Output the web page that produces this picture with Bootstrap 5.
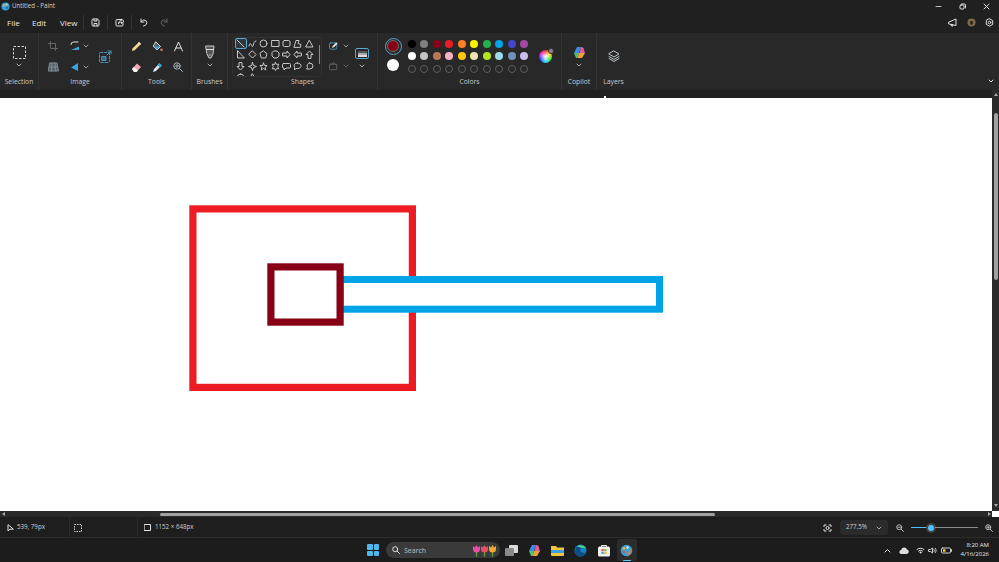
<!DOCTYPE html>
<html lang="en">
<head>
<meta charset="UTF-8">
<title>Untitled - Paint</title>
<link href="https://cdn.jsdelivr.net/npm/bootstrap@5.3.0/dist/css/bootstrap.min.css" rel="stylesheet">
<style>
html, body { height: 100%; overflow: hidden; }
body { background: #202020; color: #e4e4e4; font-family: "Open Sans", "Noto Sans", sans-serif; font-size: 7px; line-height: 1; }
svg { display: block; fill: none; stroke: #e0e0e0; stroke-width: 1; stroke-linejoin: round; stroke-linecap: round; }
.dash-ic { stroke-linecap: butt; stroke-linejoin: miter; stroke: #d0d0d0; }

.app-shell { width: 999px; height: 562px; }
.title-bar { height: 12px; padding-left: 1px; background: #202020; }
.title-text { font-size: 6.2px; color: #cfcfcf; margin-left: 2px; }
.win-btns { margin-left: auto; margin-right: 1px; }
.win-btn { width: 24px; height: 12px; }

.menu-bar { height: 21px; background: #202020; }
.menu-item { font-size: 8px; color: #e8e8e8; }
.m-file { margin-left: 7px; width: 25px; }
.m-edit { width: 28px; }
.m-view { width: 23px; }
.menu-sep { width: 1px; height: 15px; background: #333; }
.qa-btn { width: 23px; }
.qa-last { width: 19px; }
.menu-right { margin-left: auto; width: 51px; padding-right: 5px; }

.ribbon { height: 57px; background: #282828; }
.rb-group { height: 57px; border-right: 1px solid #333; flex: none; }
.rb-body { height: 43.5px; padding-top: 2.5px; }
.rb-stack { padding-top: 13px; }
.rb-label { font-size: 6.8px; color: #c8c8c8; text-align: center; height: 9px; line-height: 9px; }
.ic-cell { height: 21px; }
.g-select { width: 39px; }
.g-image { width: 83px; }
.g-image .rb-body { display: grid; grid-template-columns: 28px 16px 6px 33px; grid-template-rows: 21px 21px; }
.span-rows { grid-column: 4; grid-row: 1 / 3; }
.g-tools { width: 70px; }
.g-tools .rb-body { display: grid; grid-template-columns: repeat(3, 21px); grid-template-rows: 21px 21px; padding-left: 3.5px; }
.g-brushes { width: 36px; }
.g-brushes .rb-stack { padding-top: 12px; }
.g-shapes { width: 150px; }
.shape-box { position: relative; margin: 1px 0 0 4px; width: 90px; height: 40px; border: 1px solid #333; border-radius: 4px; overflow: hidden; padding: .5px 0 0 2.3px; display: grid; grid-template-columns: repeat(7, 11.4px); grid-auto-rows: 11.3px; flex: none; }
.shape-cell { position: relative; }
.shape-cell svg { stroke: #c8c8c8; }
.shape-on { border: 1px solid #5aa7cf; border-radius: 2px; background: #30383d; }
.shape-scroll { position: absolute; left: 85.5px; top: 7px; width: 1.5px; height: 19px; background: #8a8a8a; }
.shape-opts { width: 30px; flex: none; padding-left: 7px; }
.size-col { width: 20px; flex: none; padding-top: 12.500px; }
.size-box { width: 14px; height: 11px; border: 1px solid #5aa7cf; border-radius: 2px; margin-bottom: 5px; }
.size-bars { width: 9px; height: 6px; background: linear-gradient(#555 0 2px, #aaa 2px 4px, #ddd 4px); }
.g-colors { width: 184px; }
.active-col { width: 27.8px; padding-left: 3px; flex: none; }
.col-ring { width: 17px; height: 17px; border-radius: 50%; border: 1px solid #5aa7cf; padding: 1.5px; margin-top: 2px; }
.col-one { width: 100%; height: 100%; border-radius: 50%; background: #880015; border: 1px solid #6b6b6b; }
.col-two { width: 12px; height: 12px; border-radius: 50%; background: #fff; margin-top: 4.5px; }
.sw-grid { display: grid; grid-template-columns: repeat(10, 12.45px); grid-auto-rows: 12.4px; padding-top: 2.3px; flex: none; }
.sw-dot { width: 8px; height: 8px; border-radius: 50%; }
.sw-empty { border: 1px solid #5e5e5e; }
.rainbow-col { flex: 1; }
.rainbow { position: relative; width: 13px; height: 13px; border-radius: 50%; background: radial-gradient(#fff 0, rgba(255,255,255,0) 65%), conic-gradient(#ff2a2a, #ffd800, #30e030, #20d0ff, #2a40ff, #e020e0, #ff2a2a); }
.rainbow-badge { position: absolute; right: -2px; top: -2px; width: 6px; height: 6px; border-radius: 50%; background: #888; border: 1px solid #3a3a3a; }
.g-copilot { width: 35px; }
.g-layers { width: 33px; border-right: 0; }
.rb-rest { margin-left: auto; width: 16px; padding-bottom: 7px; }

.work-band { height: 8px; background: #202020; position: relative; }
.handle { position: absolute; left: 604px; top: 6px; width: 2px; height: 2px; background: #fff; }
.canvas-row { height: 421px; margin-top: -8px; }
.canvas-view { width: 992px; padding-top: 8px; }
.paper { display: block; width: 992px; height: 413px; background: #fff; }
.v-track { width: 7px; height: 100%; background: #2a2a2a; position: relative; }
.v-thumb { width: 3.5px; height: 167px; background: #a0a0a0; border-radius: 2px; margin: 17px 0 0 2px; }
.arrow-up { width: 0; height: 0; border: 2.5px solid transparent; border-bottom: 3px solid #a8a8a8; border-top: 0; margin: 3px 0 0 1.5px; }
.arrow-down { position: absolute; left: 1.5px; bottom: 4px; border: 2.5px solid transparent; border-top: 3px solid #a8a8a8; border-bottom: 0; }

.h-row { height: 6px; background: #fff; }
.h-track { width: 992px; height: 6px; background: #2a2a2a; position: relative; }
.h-thumb { position: absolute; left: 160px; top: 1.500px; width: 555px; height: 3px; background: #a0a0a0; border-radius: 2px; }
.ar-left { position: absolute; left: 2px; top: .5px; border: 2.5px solid transparent; border-right: 3px solid #a8a8a8; border-left: 0; }
.ar-right { position: absolute; right: 1px; top: .5px; border: 2.5px solid transparent; border-left: 3px solid #a8a8a8; border-right: 0; }

.status-bar { height: 21px; background: #1e1e1e; border-bottom: 1px solid #2c2c2c; color: #cfcfcf; font-size: 6.2px; padding-top: 1px; }
.st-cell { height: 19px; }
.st-pos { width: 70px; padding-left: 7px; border-right: 1px solid #2b2b2b; gap: 3px; }
.st-sel { width: 68px; padding-left: 4px; border-right: 1px solid #2b2b2b; }
.st-size { padding-left: 6px; gap: 4px; }
.st-right { margin-left: auto; padding-right: 6px; }
.zoom-pick { width: 48px; height: 15px; background: #2b2b2b; border-radius: 3px; margin: 0 8px; padding: 0 6px; font-size: 6.2px; }
.slider-on { width: 16px; height: 1.5px; background: #4cc2ff; margin-left: 7px; }
.slider-knob { width: 6px; height: 6px; border-radius: 50%; background: #4cc2ff; box-shadow: 0 0 0 2px #454545; margin: 0 1px; }
.slider-off { width: 43px; height: 1.5px; background: #8a8a8a; margin-right: 7px; }

.task-bar { height: 24px; background: #1c1c1c; position: relative; }
.task-center { position: absolute; left: 362px; top: 0; height: 24px; }
.start-btn { display: grid; grid-template-columns: 5.5px 5.5px; grid-template-rows: 5.5px 5.5px; gap: 1px; width: 22px; justify-content: center; }
.start-btn span { background: #4fb8ea; border-radius: 1px; }
.search-pill { width: 114px; height: 16px; margin-left: 2px; background: #3a3a3a; border-radius: 8px; padding: 0 1px 0 6px; color: #c0c0c0; font-size: 7px; }
.task-ic { width: 23px; height: 22px; }
.task-on { background: #2c2c2c; border-radius: 3px; position: relative; width: 20px; margin: 0 1.5px; }
.task-on::after { content: ""; position: absolute; left: 6px; bottom: 0; width: 8px; height: 1.5px; background: #60cdff; border-radius: 1px; }
.tray { position: absolute; right: 0; top: 0; height: 24px; padding-right: 10px; }
.tr-chev { margin-right: 8.5px; }
.tr-cloud { margin-right: 6.5px; }
.tr-wifi { margin-right: 3px; }
.tr-vol { margin-right: 4px; }
.clock { width: 34px; text-align: right; color: #e6e6e6; font-size: 6px; line-height: 9px; margin-left: 3.5px; }
</style>
</head>
<body>
<svg width="0" height="0" style="position:absolute">
  <symbol id="chev" viewBox="0 0 6 4"><path d="M1 1l2 2 2-2"/></symbol>
</svg>

<div class="app-shell d-flex flex-column">
  <!-- title -->
  <div class="title-bar d-flex align-items-center">
    <svg width="9" height="9" viewBox="0 0 8 8" style="stroke:none"><circle cx="4" cy="4" r="3.6" fill="#3aa0d8"/><circle cx="2.6" cy="3" r="1" fill="#e8b23a"/><circle cx="5" cy="2.2" r=".9" fill="#d9d9d9"/><circle cx="5.4" cy="5.2" r="1" fill="#1b6ea8"/></svg>
    <span class="title-text">Untitled - Paint</span>
    <div class="win-btns d-flex">
      <div class="win-btn d-flex align-items-center justify-content-center"><svg width="7" height="7" viewBox="0 0 7 7"><path d="M1 3.500h5" stroke="#bbb"/></svg></div>
      <div class="win-btn d-flex align-items-center justify-content-center"><svg width="7" height="7" viewBox="0 0 7 7"><rect x="1" y="2" width="4" height="4" rx="1"/><path d="M2.500 1h3a1 1 0 0 1 1 1v3"/></svg></div>
      <div class="win-btn d-flex align-items-center justify-content-center"><svg width="7" height="7" viewBox="0 0 7 7"><path d="M1 1l5 5M6 1l-5 5"/></svg></div>
    </div>
  </div>

  <!-- menu -->
  <div class="menu-bar d-flex align-items-center">
    <span class="menu-item m-file">File</span>
    <span class="menu-item m-edit">Edit</span>
    <span class="menu-item m-view">View</span>
    <div class="menu-sep"></div>
    <div class="qa-btn d-flex justify-content-center"><svg width="9" height="9" viewBox="0 0 9 9"><path d="M1 2a1 1 0 0 1 1-1h4.500l1.500 1.500V7a1 1 0 0 1-1 1H2a1 1 0 0 1-1-1z"/><path d="M3 1v2h3V1M3 8V5.500h3V8"/></svg></div>
    <div class="menu-sep"></div>
    <div class="qa-btn d-flex justify-content-center"><svg width="10" height="9" viewBox="0 0 10 9"><path d="M6 1.500H2a1 1 0 0 0-1 1V7a1 1 0 0 0 1 1h5a1 1 0 0 0 1-1V5"/><path d="M3.500 5.500c0-2 1.500-3 3-3V1l2.500 2.300-2.500 2.200V4c-1.200 0-2 .5-3 1.500z"/></svg></div>
    <div class="menu-sep"></div>
    <div class="qa-btn d-flex justify-content-center"><svg width="9" height="9" viewBox="0 0 9 9"><path d="M2 1v3h3M2 4c1-1.500 2-2 3-2a2.800 2.800 0 0 1 1 5.400L4.500 8"/></svg></div>
    <div class="qa-last d-flex justify-content-center"><svg width="9" height="9" viewBox="0 0 9 9" style="stroke:#666"><path d="M7 1v3H4M7 4C6 2.500 5 2 4 2a2.800 2.800 0 0 0-1 5.400L4.500 8"/></svg></div>
    <div class="menu-right d-flex align-items-center justify-content-between ms-auto">
      <svg width="10" height="9" viewBox="0 0 10 9"><path d="M1 4l7-3v6.500L1 6zM3 6.300l.5 1.700h1.500l-.4-1.400"/></svg>
      <svg width="9" height="9" viewBox="0 0 9 9" style="stroke:none"><circle cx="4.500" cy="4.500" r="4" fill="#7d6a4a"/><rect x="3.300" y="3" width="2.400" height="3.500" fill="#2a2218"/></svg>
      <svg width="9" height="9" viewBox="0 0 9 9"><path d="M4.500.8l3.200 1.800v3.800L4.500 8.200 1.300 6.400V2.600z"/><circle cx="4.500" cy="4.500" r="1.300"/></svg>
    </div>
  </div>

  <!-- ribbon -->
  <div class="ribbon d-flex">
    <div class="rb-group g-select">
      <div class="rb-body rb-stack d-flex flex-column align-items-center">
        <svg class="dash-ic" width="13" height="13" viewBox="0 0 13 13" stroke-dasharray="2.500 1.500"><rect x=".5" y=".5" width="12" height="12"/></svg>
        <svg class="mt-1" width="6" height="4" style="stroke:#aaa"><use href="#chev"/></svg>
      </div>
      <div class="rb-label">Selection</div>
    </div>

    <div class="rb-group g-image">
      <div class="rb-body">
        <div class="ic-cell d-flex align-items-center justify-content-center"><svg width="10" height="10" viewBox="0 0 10 10" style="stroke:#666"><path d="M2.500 0v7.500H10M0 2.500h7.500V10"/></svg></div>
        <div class="ic-cell d-flex align-items-center justify-content-center"><svg width="10" height="10" viewBox="0 0 10 10"><path d="M1 3.500a2.500 2.500 0 0 1 2.500-2.500H8" stroke="#ddd"/><path d="M1 9h8V5.500z" fill="#3aa5dc" stroke="none"/></svg></div>
        <div class="ic-cell d-flex align-items-center justify-content-center"><svg width="6" height="4" style="stroke:#999"><use href="#chev"/></svg></div>
        <div class="span-rows d-flex align-items-center justify-content-center"><svg width="13" height="13" viewBox="0 0 13 13" style="stroke:#4a93b8"><rect x=".5" y="2.500" width="10" height="10" rx="1" stroke-dasharray="2.500 1.500"/><path d="M8 5l4-4M9 1h3v3"/><rect x="3" y="6.500" width="4" height="4" fill="#3a6a84"/></svg></div>
        <div class="ic-cell d-flex align-items-center justify-content-center"><svg width="11" height="10" viewBox="0 0 11 10" style="stroke:#7e8c96"><path d="M2 1h7l1.500 8h-10z" fill="#556069"/><path d="M4 1l-.5 8M7 1l.5 8M1.500 5h8"/></svg></div>
        <div class="ic-cell d-flex align-items-center justify-content-center"><svg width="10" height="10" viewBox="0 0 10 10" style="stroke:none"><path d="M8 1v8L1 5.500z" fill="#3aa5dc"/></svg></div>
        <div class="ic-cell d-flex align-items-center justify-content-center"><svg width="6" height="4" style="stroke:#999"><use href="#chev"/></svg></div>
      </div>
      <div class="rb-label">Image</div>
    </div>

    <div class="rb-group g-tools">
      <div class="rb-body">
        <div class="ic-cell d-flex align-items-center justify-content-center"><svg width="11" height="11" viewBox="0 0 11 11" style="stroke:none"><path d="M1 10l.7-2.700L8 1l2 2-6.300 6.300z" fill="#f2d98b"/><path d="M8 1l2 2-1 1-2-2z" fill="#e8e8e8"/></svg></div>
        <div class="ic-cell d-flex align-items-center justify-content-center"><svg width="11" height="11" viewBox="0 0 11 11"><path d="M4 1l4.500 4.500L5 9 1.500 5.500z" fill="#55616b" stroke="#ddd"/><path d="M2 5.500h6L5 9z" fill="#3aa5dc" stroke="none"/><circle cx="9.500" cy="8.800" r="1.300" fill="#e8734a" stroke="none"/></svg></div>
        <div class="ic-cell d-flex align-items-center justify-content-center"><svg width="11" height="11" viewBox="0 0 11 11"><path d="M1.500 10L5.500 1l4 9M3 7h5"/></svg></div>
        <div class="ic-cell d-flex align-items-center justify-content-center"><svg width="11" height="11" viewBox="0 0 11 11" style="stroke:none"><path d="M1 7l5-5.500 4 3.500-4.500 5H3z" fill="#eda8b4"/><path d="M1 7l2-2 4 3.300L5.500 10H3z" fill="#f7f7f7"/></svg></div>
        <div class="ic-cell d-flex align-items-center justify-content-center"><svg width="11" height="11" viewBox="0 0 11 11"><path d="M1 10l1-3 4-4 2 2-4 4z" fill="#dfe7ee" stroke="none"/><path d="M5.500 2.500l2-1.500 2.500 2.500L8.500 5.500z" fill="#3aa5dc" stroke="none"/></svg></div>
        <div class="ic-cell d-flex align-items-center justify-content-center"><svg width="10" height="10" viewBox="0 0 10 10" style="stroke:#aab4ba"><circle cx="4" cy="4" r="3.200"/><path d="M6.500 6.500L9.500 9.500M2.500 4h3M4 2.500v3"/></svg></div>
      </div>
      <div class="rb-label">Tools</div>
    </div>

    <div class="rb-group g-brushes">
      <div class="rb-body rb-stack d-flex flex-column align-items-center">
        <svg width="10" height="14" viewBox="0 0 10 14" style="stroke:#c8c8c8"><path d="M1 1h8l-1 8-2 4H4L2 9z" fill="#555"/><path d="M1.500 4.500h7" stroke="#ddd"/><path d="M4 10h2" stroke="#aaa"/></svg>
        <svg class="mt-1" width="6" height="4" style="stroke:#aaa"><use href="#chev"/></svg>
      </div>
      <div class="rb-label">Brushes</div>
    </div>

    <div class="rb-group g-shapes">
      <div class="rb-body d-flex">
        <div class="shape-box" id="shapeBox">
          <div class="shape-scroll"></div>
        </div>
        <div class="shape-opts d-flex flex-column">
          <div class="ic-cell d-flex align-items-center gap-1"><svg width="10" height="10" viewBox="0 0 11 10"><rect x=".5" y="1.500" width="8" height="7" rx="1.500" stroke="#4a93b8"/><path d="M3 7l1-2 4-4 1.500 1.500-4 4z" fill="#ddd" stroke="none"/></svg><svg width="6" height="4" style="stroke:#999"><use href="#chev"/></svg></div>
          <div class="ic-cell d-flex align-items-center gap-1"><svg width="10" height="10" viewBox="0 0 11 10" style="stroke:#666"><rect x=".5" y="3" width="8" height="6" rx="1"/><path d="M3 3l2-2 3 3"/></svg><svg width="6" height="4" style="stroke:#666"><use href="#chev"/></svg></div>
        </div>
        <div class="size-col d-flex flex-column align-items-center">
          <div class="size-box d-flex align-items-center justify-content-center"><div class="size-bars"></div></div>
          <svg width="6" height="4" style="stroke:#aaa"><use href="#chev"/></svg>
        </div>
      </div>
      <div class="rb-label">Shapes</div>
    </div>

    <div class="rb-group g-colors">
      <div class="rb-body d-flex">
        <div class="active-col d-flex flex-column align-items-center">
          <div class="col-ring"><div class="col-one"></div></div>
          <div class="col-two"></div>
        </div>
        <div class="sw-grid" id="swatches"></div>
        <div class="rainbow-col d-flex align-items-center justify-content-center">
          <div class="rainbow"><div class="rainbow-badge"></div></div>
        </div>
      </div>
      <div class="rb-label">Colors</div>
    </div>

    <div class="rb-group g-copilot">
      <div class="rb-body rb-stack d-flex flex-column align-items-center">
        <svg width="13" height="13" viewBox="0 0 13 13" style="stroke:none"><path d="M4 1h4L6 7H1z" fill="#3a8be8"/><path d="M8 1a3 3 0 0 1 3 3l1 3H6.500z" fill="#e85a9a"/><path d="M1 7h5L4.500 12H3z" fill="#4fc36a"/><path d="M6 7h6L9 12H4.500z" fill="#f2a03a"/></svg>
        <svg class="mt-1" width="6" height="4" style="stroke:#aaa"><use href="#chev"/></svg>
      </div>
      <div class="rb-label">Copilot</div>
    </div>

    <div class="rb-group g-layers">
      <div class="rb-body d-flex align-items-center justify-content-center">
        <svg width="12" height="12" viewBox="0 0 12 12" style="stroke:#b8c4c8"><path d="M6 1l5 3-5 3-5-3zM1 6.500l5 3 5-3M1 8.500l5 3 5-3"/></svg>
      </div>
      <div class="rb-label">Layers</div>
    </div>

    <div class="rb-rest d-flex align-items-end justify-content-center">
      <svg width="6" height="4"><use href="#chev"/></svg>
    </div>
  </div>

  <div class="work-band"><div class="handle"></div></div>

  <!-- canvas -->
  <div class="canvas-row d-flex">
    <div class="canvas-view">
      <svg class="paper" viewBox="0 0 992 413" style="stroke-linecap:butt;stroke-linejoin:miter">
        <rect x="192.900" y="110.900" width="219.500" height="178.500" stroke="#ed1c24" stroke-width="7.200"/>
        <rect x="340" y="181.500" width="319.500" height="29.700" fill="#fff" stroke="#00a2e8" stroke-width="7"/>
        <rect x="270.900" y="168.900" width="69.200" height="55.200" fill="#fff" stroke="#880015" stroke-width="7.200"/>
      </svg>
    </div>
    <div class="v-track">
      <div class="arrow-up"></div>
      <div class="v-thumb"></div>
      <div class="arrow-down"></div>
    </div>
  </div>

  <div class="h-row">
    <div class="h-track"><div class="ar-left"></div><div class="h-thumb"></div><div class="ar-right"></div></div>
  </div>

  <!-- status -->
  <div class="status-bar d-flex align-items-center">
    <div class="st-cell st-pos d-flex align-items-center">
      <svg width="7" height="8" viewBox="0 0 7 8"><path d="M1 1v6l2-1.800h3z"/></svg><span>539, 79px</span>
    </div>
    <div class="st-cell st-sel d-flex align-items-center">
      <svg class="dash-ic" width="8" height="8" viewBox="0 0 8 8" stroke-dasharray="1.500 1"><rect x=".5" y=".5" width="7" height="7"/></svg>
    </div>
    <div class="st-cell st-size d-flex align-items-center">
      <svg width="7" height="7" viewBox="0 0 7 7"><rect x=".5" y=".5" width="6" height="6"/></svg><span>1152 × 648px</span>
    </div>
    <div class="st-right d-flex align-items-center">
      <svg width="9" height="8" viewBox="0 0 9 8"><path d="M1 2.500V1h2M6 1h2v1.500M1 5.500V7h2M6 7h2V5.500"/><circle cx="4.500" cy="4" r="1.500"/></svg>
      <div class="zoom-pick d-flex align-items-center justify-content-between"><span>277.5%</span><svg width="6" height="4" style="stroke:#aaa"><use href="#chev"/></svg></div>
      <svg width="8" height="8" viewBox="0 0 8 8" style="stroke:#bbb"><circle cx="3.200" cy="3.200" r="2.500"/><path d="M5.200 5.200L7.500 7.500M2 3.200h2.400"/></svg>
      <div class="slider-on"></div><div class="slider-knob"></div><div class="slider-off"></div>
      <svg width="8" height="8" viewBox="0 0 8 8" style="stroke:#bbb"><circle cx="3.200" cy="3.200" r="2.500"/><path d="M5.200 5.200L7.500 7.500M2 3.200h2.400M3.200 2v2.400"/></svg>
    </div>
  </div>

  <!-- taskbar -->
  <div class="task-bar">
    <div class="task-center d-flex align-items-center">
      <div class="start-btn"><span></span><span></span><span></span><span></span></div>
      <div class="search-pill d-flex align-items-center">
        <svg width="8" height="8" viewBox="0 0 8 8" style="stroke:#ddd"><circle cx="3.200" cy="3.200" r="2.500"/><path d="M5.200 5.200L7.500 7.500"/></svg>
        <span class="ms-1">Search</span>
        <svg class="ms-auto" width="27" height="14" viewBox="0 0 27 14" style="stroke:none">
          <path d="M4.500 8v5M12.500 8v5M20.500 8v5" stroke="#5c9a3c" stroke-width="1.500"/>
          <path d="M1 3l2 1.500L4.500 2 6 4.500 8 3v3a3.500 3.500 0 0 1-7 0z" fill="#e84fa8"/>
          <path d="M9 3l2 1.500L12.500 2 14 4.500 16 3v3a3.500 3.500 0 0 1-7 0z" fill="#e8506a"/>
          <path d="M17 3l2 1.500L20.500 2 22 4.500 24 3v3a3.500 3.500 0 0 1-7 0z" fill="#f0a830"/>
        </svg>
      </div>
      <div class="task-ic d-flex align-items-center justify-content-center"><svg width="13" height="11" viewBox="0 0 13 11" style="stroke:none"><rect x="4" y="0" width="9" height="8" rx="1" fill="#dcdcdc"/><rect x="0" y="3" width="9" height="8" rx="1" fill="#8a8a8a"/></svg></div>
      <div class="task-ic d-flex align-items-center justify-content-center"><svg width="13" height="13" viewBox="0 0 13 13" style="stroke:none"><path d="M4 1h4L6 7H1z" fill="#3a8be8"/><path d="M8 1a3 3 0 0 1 3 3l1 3H6.500z" fill="#e85a9a"/><path d="M1 7h5L4.500 12H3z" fill="#4fc36a"/><path d="M6 7h6L9 12H4.500z" fill="#f2a03a"/></svg></div>
      <div class="task-ic d-flex align-items-center justify-content-center"><svg width="13" height="11" viewBox="0 0 13 11" style="stroke:none"><path d="M0 1h5l1 1.500h7V10a1 1 0 0 1-1 1H1a1 1 0 0 1-1-1z" fill="#f2c33c"/><rect x="0" y="5" width="13" height="3" fill="#3aa0e0"/></svg></div>
      <div class="task-ic d-flex align-items-center justify-content-center"><svg width="13" height="13" viewBox="0 0 13 13" style="stroke:none"><circle cx="6.500" cy="6.500" r="6" fill="#1580c4"/><path d="M1 7a6 6 0 0 1 11.500-2c-1-2-6-2.500-6.500 1 0 2 3 3.500 6 2.500A6 6 0 0 1 7 12.500 5 5 0 0 1 1 7z" fill="#0c4f86"/><path d="M3 2.500a6 6 0 0 1 9.500 3c-1-1.500-2.500-2-4-1.500z" fill="#4fdc8a"/></svg></div>
      <div class="task-ic d-flex align-items-center justify-content-center"><svg width="12" height="13" viewBox="0 0 12 13" style="stroke:none"><rect x="0" y="2.500" width="12" height="10" rx="1.500" fill="#efefef"/><path d="M3.500 3V1.500h5V3" stroke="#efefef" fill="none"/><rect x="3.500" y="5" width="2.200" height="2.200" fill="#e8533a"/><rect x="6.300" y="5" width="2.200" height="2.200" fill="#7cbb3a"/><rect x="3.500" y="7.800" width="2.200" height="2.200" fill="#2ea0e8"/><rect x="6.300" y="7.800" width="2.200" height="2.200" fill="#f2b92c"/></svg></div>
      <div class="task-ic task-on d-flex align-items-center justify-content-center"><svg width="13" height="13" viewBox="0 0 13 13" style="stroke:none"><circle cx="6.500" cy="6.500" r="5.800" fill="#3aa0d8"/><circle cx="4" cy="4.500" r="1.400" fill="#e8b23a"/><circle cx="7.500" cy="3.500" r="1.200" fill="#e8e8e8"/><circle cx="3.800" cy="8" r="1.200" fill="#d8503a"/><path d="M7 13l1-5 3-3-1 5z" fill="#e07a3a"/></svg></div>
    </div>
    <div class="tray d-flex align-items-center">
      <svg class="tr-chev" width="7" height="5" viewBox="0 0 7 5" style="stroke:#eee"><path d="M1 4l2.500-2.500L6 4"/></svg>
      <svg class="tr-cloud" width="10" height="7" viewBox="0 0 10 7" style="stroke:none"><path d="M2.500 7a2 2 0 0 1-.3-4A3 3 0 0 1 8 2.500 2.300 2.300 0 0 1 7.800 7z" fill="#dcdcdc"/></svg>
      <svg class="tr-wifi" width="9" height="7" viewBox="0 0 9 7" style="stroke:#ddd"><path d="M1 2.500a5 5 0 0 1 7 0M2.500 4a3 3 0 0 1 4 0"/><circle cx="4.500" cy="5.500" r=".6" fill="#ddd"/></svg>
      <svg class="tr-vol" width="9" height="7" viewBox="0 0 9 7" style="stroke:#ccc"><path d="M1 2.500h1.500L4.500 1v5L2.500 4.500H1zM6 2.300a1.500 1.500 0 0 1 0 2.400M7.300 1.300a3 3 0 0 1 0 4.400"/></svg>
      <svg width="11" height="7" viewBox="0 0 11 7"><rect x=".5" y="1" width="9" height="5" rx="1" stroke="#ccc"/><rect x="2" y="2.200" width="2.500" height="2.600" fill="#f2c33c" stroke="none"/><path d="M10.500 2.700v1.600" stroke="#ccc"/></svg>
      <div class="clock">8:20 AM<br>4/16/2026</div>
    </div>
  </div>
</div>

<script>
// colour palette rows, empty strings are the unset custom slots
const palette = ["#000000","#7f7f7f","#880015","#ed1c24","#ff7f27","#fff200","#22b14c","#00a2e8","#3f48cc","#a349a4",
  "#ffffff","#c3c3c3","#b97a57","#ffaec9","#ffc90e","#efe4b0","#b5e61d","#99d9ea","#7092be","#c8bfe7",
  "","","","","","","","","",""];
const swatches = document.getElementById("swatches");
palette.forEach(c => {
  const cell = document.createElement("div");
  cell.className = "d-flex align-items-center justify-content-center";
  const dot = document.createElement("div");
  dot.className = c ? "sw-dot" : "sw-dot sw-empty";
  if (c) dot.style.background = c;
  cell.appendChild(dot);
  swatches.appendChild(cell);
});

// shape gallery glyphs, 9x9 outlines
const shapes = [
  '<path d="M1 1l7 7"/>','<path d="M1 7c1.500-7 3 3 4 0s1-5 3-5"/>','<circle cx="4.500" cy="4.500" r="3.500"/>','<rect x="1" y="1.500" width="7" height="6"/>','<rect x="1" y="1.500" width="7" height="6" rx="1.500"/>','<path d="M1 8l2-6.500h3l-1 3 3 1-.5 2.500z"/>','<path d="M4.500 1.500L8 8H1z"/>',
  '<path d="M1.500 1v7H8z"/>','<path d="M4.500 1L8 4.500 4.500 8 1 4.500z"/>','<path d="M4.500 1L8 3.700 6.700 8H2.300L1 3.700z"/>','<path d="M3 1h3l2 2v3L6 8H3L1 6V3z"/>','<path d="M1 3h4V1l3 3.500L5 8V6H1z"/>','<path d="M8 3H4V1L1 4.500 4 8V6h4z"/>','<path d="M3 8V4.500H1L4.500 1 8 4.500H6V8z"/>',
  '<path d="M3 1v3.500H1L4.500 8 8 4.500H6V1z"/>','<path d="M4.500.5l1 3 3 1-3 1-1 3-1-3-3-1 3-1z"/>','<path d="M4.500 1l1 2.400 2.600.2-2 1.700.6 2.600-2.200-1.400-2.200 1.400.6-2.600-2-1.700 2.600-.2z"/>','<path d="M4.500.5l1 1.900 2.200-.2-.9 2.300.9 2.300-2.200-.2-1 1.900-1-1.900-2.200.2.900-2.300-.9-2.300 2.200.2z"/>','<path d="M1.500 1.500h6a1 1 0 0 1 1 1v2.500a1 1 0 0 1-1 1H4L2 8V6h-.5a1 1 0 0 1-1-1V2.500a1 1 0 0 1 1-1z"/>','<path d="M4.500 1a3.700 2.800 0 1 1-1.500 5.400L1.500 8l.2-2.600A2.800 2.800 0 0 1 4.500 1z"/>','<path d="M4.500 1a3.500 3 0 1 1 0 6H1.500l1-1.500A3 3 0 0 1 4.500 1z"/>',
  '<path d="M4.500 1a3.500 3 0 0 0-1 5.800L3 8l2-1a3 3 0 0 0-.5-6z"/>','<path d="M4.500 1l2 3.500-2 3.500-2-3.500z"/>'];
const box = document.getElementById("shapeBox");
shapes.forEach((s, i) => {
  const cell = document.createElement("div");
  cell.className = "shape-cell d-flex align-items-center justify-content-center" + (i === 0 ? " shape-on" : "");
  cell.innerHTML = '<svg width="9" height="9" viewBox="0 0 9 9">' + s + '</svg>';
  box.appendChild(cell);
});
</script>
<script src="https://cdn.jsdelivr.net/npm/bootstrap@5.3.0/dist/js/bootstrap.bundle.min.js"></script>
</body>
</html>
